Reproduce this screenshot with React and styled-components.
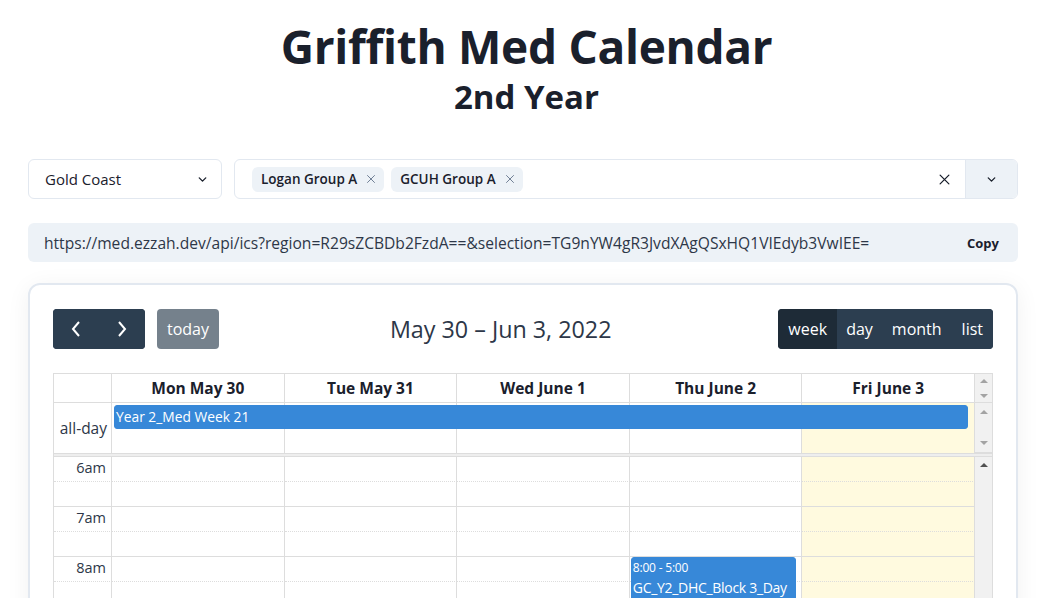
import React from "react";
import styled, { createGlobalStyle } from "styled-components";

const Global = createGlobalStyle`
  html, body { margin: 0; padding: 0; background: #fff; }
  body {
    font-family: "Open Sans", "Noto Sans", sans-serif;
    color: #1a202c;
  }
  * { box-sizing: border-box; }
`;

const Page = styled.div`
  padding: 0 30px 0 28px;
`;

const Heading = styled.header`
  text-align: center;
  padding: 17px 0 0 7px;
  h1 {
    margin: 0;
    font-size: 46px;
    line-height: 58px;
    font-weight: 700;
    letter-spacing: -0.3px;
  }
  h2 {
    margin: 0;
    font-size: 33px;
    line-height: 44px;
    font-weight: 700;
  }
`;

const SelectRow = styled.div`
  display: flex;
  gap: 12px;
  margin-top: 40px;
`;

const Select = styled.div`
  width: 194px;
  height: 40px;
  border: 1px solid #e2e8f0;
  border-radius: 6px;
  display: flex;
  align-items: center;
  justify-content: space-between;
  padding: 0 12px 0 16px;
  font-size: 15px;
`;

const Multi = styled.div`
  flex: 1;
  height: 40px;
  border: 1px solid #e2e8f0;
  border-radius: 6px;
  display: flex;
  align-items: stretch;
  overflow: hidden;
`;

const Tags = styled.div`
  flex: 1;
  display: flex;
  align-items: center;
  gap: 7px;
  padding-left: 17px;
`;

const Tag = styled.span`
  display: inline-flex;
  align-items: center;
  gap: 8px;
  height: 25px;
  padding: 0 7px 0 9px;
  background: #edf2f7;
  border-radius: 6px;
  font-size: 13.5px;
  font-weight: 600;
  color: #1a202c;
`;

const ClearBtn = styled.div`
  width: 42px;
  display: flex;
  align-items: center;
  justify-content: center;
`;

const DropBtn = styled.div`
  width: 52px;
  background: #edf2f7;
  border-left: 1px solid #e2e8f0;
  display: flex;
  align-items: center;
  justify-content: center;
`;

const UrlBox = styled.div`
  margin-top: 24px;
  height: 39px;
  background: #edf2f7;
  border-radius: 6px;
  display: flex;
  align-items: center;
  justify-content: space-between;
  padding: 0 19px 0 16px;
  font-size: 15.6px;
  color: #2d3748;
  span.copy {
    font-size: 13px;
    font-weight: 700;
    color: #1a202c;
  }
`;

const Card = styled.section`
  margin-top: 21px;
  border: 2px solid #e2e8f0;
  border-radius: 12px;
  padding: 23px 23px 0 23px;
  box-shadow: 0 4px 24px rgba(0, 0, 0, 0.06);
  height: 340px;
  overflow: hidden;
`;

const Toolbar = styled.div`
  display: flex;
  align-items: center;
  justify-content: space-between;
  height: 41px;
  margin-bottom: 24px;
`;

const Chunk = styled.div`
  display: flex;
  align-items: center;
  gap: 12px;
`;

const BtnGroup = styled.div`
  display: flex;
  border-radius: 4px;
  overflow: hidden;
  background: #2c3e50;
`;

const Btn = styled.button`
  border: 0;
  margin: 0;
  height: 40px;
  padding: 0 ${(p) => (p.$pad ? p.$pad : 11)}px;
  background: ${(p) => (p.$active ? "#1e2b37" : "#2c3e50")};
  color: #fff;
  font-family: inherit;
  font-size: 16px;
  display: flex;
  align-items: center;
  justify-content: center;
  opacity: ${(p) => (p.$disabled ? 0.65 : 1)};
  border-radius: ${(p) => (p.$solo ? "4px" : "0")};
`;

const Title = styled.h2`
  margin: 0 0 0 4px;
  font-size: 23.3px;
  font-weight: 400;
  color: #2d3748;
`;

const cols = "58px repeat(5, 1fr) 18px";

const Grid = styled.div`
  display: grid;
  grid-template-columns: ${cols};
  border-top: 1px solid #ddd;
  border-left: 1px solid #ddd;
`;

const HeadCell = styled.div`
  height: 29px;
  border-right: 1px solid #ddd;
  border-bottom: 1px solid #ddd;
  display: flex;
  align-items: center;
  justify-content: center;
  font-size: 15.5px;
  font-weight: 700;
  color: #1a202c;
`;

const Bar = styled.div`
  background: #f1f1f1;
  border-right: 1px solid #ddd;
  border-bottom: 1px solid #ddd;
  display: flex;
  flex-direction: column;
  align-items: center;
  justify-content: space-between;
  padding: ${(p) => p.$pad || "4px 0"};
`;

const Tri = styled.span`
  width: 0;
  height: 0;
  border-left: 4px solid transparent;
  border-right: 4px solid transparent;
  ${(p) =>
    p.$down
      ? `border-top: 4px solid ${p.$dark ? "#505050" : "#a3a3a3"};`
      : `border-bottom: 4px solid ${p.$dark ? "#505050" : "#a3a3a3"};`}
`;

const AllDayLabel = styled.div`
  height: 50px;
  border-right: 1px solid #ddd;
  display: flex;
  align-items: center;
  justify-content: flex-end;
  padding: 0 4px 0 0;
  font-size: 15.5px;
  color: #2d3748;
`;

const AllDayCell = styled.div`
  position: relative;
  height: 50px;
  border-right: 1px solid #ddd;
  background: ${(p) => (p.$today ? "#fffadf" : "#fff")};
`;

const AllDayEvent = styled.div`
  position: absolute;
  top: 2px;
  left: 2px;
  width: calc(500% - 4px);
  height: 24px;
  background: #3788d8;
  border: 1px solid #3788d8;
  border-radius: 3px;
  color: #fff;
  font-size: 13.8px;
  line-height: 21px;
  padding-left: 1px;
  z-index: 1;
`;

const Divider = styled.div`
  grid-column: 1 / -1;
  height: 4px;
  background: #eee;
  border-top: 1px solid #ddd;
  border-bottom: 1px solid #ddd;
  border-right: 1px solid #ddd;
`;

const Slot = styled.div`
  position: relative;
  height: 25px;
  border-right: 1px solid #ddd;
  border-bottom: 1px ${(p) => (p.$half ? "dotted" : "solid")} #ddd;
  background: ${(p) => (p.$today ? "#fffadf" : "#fff")};
`;

const AxisSlot = styled.div`
  height: 25px;
  border-right: 1px solid #ddd;
  border-bottom: 1px ${(p) => (p.$half ? "dotted" : "solid")} #ddd;
  text-align: right;
  padding: 1px 5px 0 0;
  font-size: 14.5px;
  color: #2d3748;
`;

const BodyBar = styled.div`
  grid-column: 7;
  grid-row: 1 / span 40;
  background: #f1f1f1;
  border-right: 1px solid #ddd;
  display: flex;
  justify-content: center;
  padding-top: 6px;
`;

const BodyGrid = styled.div`
  display: grid;
  grid-template-columns: ${cols};
  border-left: 1px solid #ddd;
`;

const TimedEvent = styled.div`
  position: absolute;
  top: 0;
  left: 1px;
  right: 5px;
  height: 450px;
  background: #3788d8;
  border: 1px solid #3788d8;
  border-radius: 3px;
  color: #fff;
  padding: 1px 1px;
  z-index: 1;
  white-space: nowrap;
  overflow: hidden;
  .time {
    font-size: 12px;
    line-height: 18px;
    letter-spacing: -0.2px;
  }
  .name {
    font-size: 14px;
    line-height: 22px;
    letter-spacing: -0.3px;
  }
`;

const Chevron = ({ size = 12, color = "#1a202c", width = 2.5 }) => (
  <svg width={size} height={size} viewBox="0 0 24 24" fill="none" stroke={color} strokeWidth={width} strokeLinecap="round" strokeLinejoin="round">
    <path d="M6 9l6 6 6-6" />
  </svg>
);

const Cross = ({ size = 12, color = "#718096", width = 2 }) => (
  <svg width={size} height={size} viewBox="0 0 24 24" fill="none" stroke={color} strokeWidth={width} strokeLinecap="round">
    <path d="M5 5l14 14M19 5L5 19" />
  </svg>
);

const Arrow = ({ dir }) => (
  <svg width="10" height="16" viewBox="0 0 10 16" fill="none" stroke="#fff" strokeWidth="2">
    <path d={dir === "left" ? "M8 1L2 8l6 7" : "M2 1l6 7-6 7"} />
  </svg>
);

const days = ["Mon May 30", "Tue May 31", "Wed June 1", "Thu June 2", "Fri June 3"];
const hours = ["6am", "7am", "8am"];

export default function App() {
  const bodyCells = [];
  hours.forEach((h) => {
    [true, false].forEach((first) => {
      bodyCells.push(
        <AxisSlot key={`a-${h}-${first}`} $half={first}>
          {first ? h : ""}
        </AxisSlot>
      );
      days.forEach((d, di) => {
        bodyCells.push(
          <Slot key={`${d}-${h}-${first}`} $half={first} $today={di === 4}>
            {di === 3 && h === "8am" && first && (
              <TimedEvent>
                <div className="time">8:00 - 5:00</div>
                <div className="name">GC_Y2_DHC_Block 3_Day</div>
              </TimedEvent>
            )}
          </Slot>
        );
      });
    });
  });

  return (
    <Page>
      <Global />
      <Heading>
        <h1>Griffith Med Calendar</h1>
        <h2>2nd Year</h2>
      </Heading>

      <SelectRow>
        <Select>
          Gold Coast
          <Chevron size={13} />
        </Select>
        <Multi>
          <Tags>
            <Tag>
              Logan Group A <Cross size={12} />
            </Tag>
            <Tag>
              GCUH Group A <Cross size={12} />
            </Tag>
          </Tags>
          <ClearBtn>
            <Cross size={15} color="#1a202c" width={2} />
          </ClearBtn>
          <DropBtn>
            <Chevron size={13} />
          </DropBtn>
        </Multi>
      </SelectRow>

      <UrlBox>
        <span>https://med.ezzah.dev/api/ics?region=R29sZCBDb2FzdA==&amp;selection=TG9nYW4gR3JvdXAgQSxHQ1VIEdyb3VwIEE=</span>
        <span className="copy">Copy</span>
      </UrlBox>

      <Card>
        <Toolbar>
          <Chunk>
            <BtnGroup>
              <Btn $pad={18}>
                <Arrow dir="left" />
              </Btn>
              <Btn $pad={18}>
                <Arrow dir="right" />
              </Btn>
            </BtnGroup>
            <Btn $disabled $solo $pad={10}>today</Btn>
          </Chunk>
          <Title>May 30 – Jun 3, 2022</Title>
          <Chunk>
            <BtnGroup>
              <Btn $active $pad={10}>week</Btn>
              <Btn $pad={9}>day</Btn>
              <Btn $pad={10}>month</Btn>
              <Btn $pad={10}>list</Btn>
            </BtnGroup>
          </Chunk>
        </Toolbar>

        <Grid>
          <HeadCell />
          {days.map((d) => (
            <HeadCell key={d}>{d}</HeadCell>
          ))}
          <Bar $pad="5px 0 4px">
            <Tri />
            <Tri $down />
          </Bar>

          <AllDayLabel>all-day</AllDayLabel>
          {days.map((d, i) => (
            <AllDayCell key={d} $today={i === 4}>
              {i === 0 && <AllDayEvent>Year 2_Med Week 21</AllDayEvent>}
            </AllDayCell>
          ))}
          <Bar $pad="7px 0 7px">
            <Tri />
            <Tri $down />
          </Bar>
          <Divider />
        </Grid>

        <BodyGrid>
          {bodyCells}
          <BodyBar>
            <Tri $dark />
          </BodyBar>
        </BodyGrid>
      </Card>
    </Page>
  );
}
